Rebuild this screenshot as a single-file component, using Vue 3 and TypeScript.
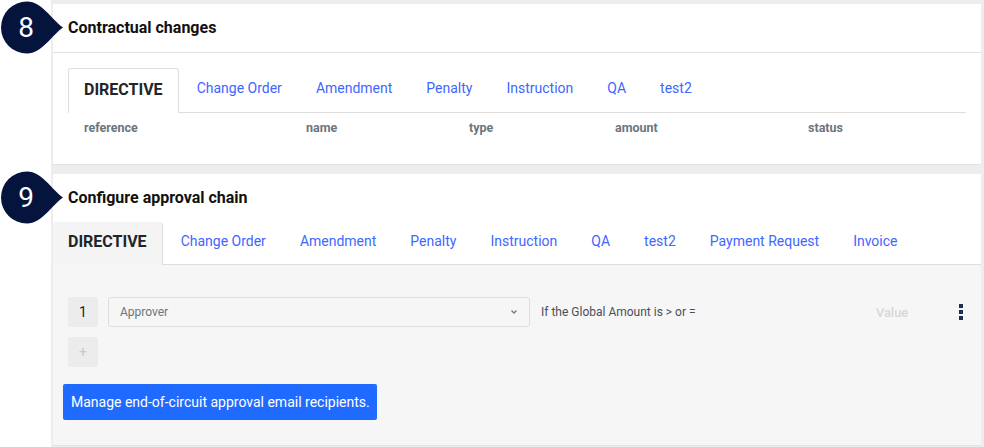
<script setup lang="ts">
const tabsTop: string[] = ['Change Order', 'Amendment', 'Penalty', 'Instruction', 'QA', 'test2']
const tabsBottom: string[] = [...tabsTop, 'Payment Request', 'Invoice']
const columns: string[] = ['reference', 'name', 'type', 'amount', 'status']
const badgePath = 'M63 27.5C52 20 42 1.5 27 1.5A26 26 0 0 0 27 53.5C42 53.5 52 35 63 27.5Z'
</script>

<template>
  <div class="page">
    <div class="content">
      <section class="card card-top">
        <h2 class="title title-top">Contractual changes</h2>
        <div class="top-body">
          <nav class="tabs">
            <span class="tab active">DIRECTIVE</span>
            <a v-for="t in tabsTop" :key="t" class="tab">{{ t }}</a>
          </nav>
          <div class="thead">
            <span v-for="c in columns" :key="c">{{ c }}</span>
          </div>
        </div>
      </section>

      <section class="card card-bottom">
        <h2 class="title title-bottom">Configure approval chain</h2>
        <nav class="tabs tabs-flush">
          <span class="tab active shaded">DIRECTIVE</span>
          <a v-for="t in tabsBottom" :key="t" class="tab">{{ t }}</a>
        </nav>
        <div class="chain">
          <div class="row">
            <span class="step">1</span>
            <div class="select">
              <span>Approver</span>
              <svg width="8" height="6" viewBox="0 0 8 6" class="chev">
                <path d="M1.5 1.5L4 4L6.5 1.5" fill="none" stroke="#777" stroke-width="1.3" />
              </svg>
            </div>
            <span class="cond">If the Global Amount is &gt; or =</span>
            <span class="value">Value</span>
            <span class="kebab"><i></i><i></i><i></i></span>
          </div>
          <span class="step add">+</span>
          <button class="manage" type="button">Manage end-of-circuit approval email recipients.</button>
        </div>
      </section>
    </div>

    <div class="badge badge-8">
      <svg width="64" height="55" viewBox="0 0 64 55"><path :d="badgePath" fill="#05143d" /></svg>
      <span>8</span>
    </div>
    <div class="badge badge-9">
      <svg width="64" height="55" viewBox="0 0 64 55"><path :d="badgePath" fill="#05143d" /></svg>
      <span>9</span>
    </div>
  </div>
</template>

<style>
html, body { margin: 0; background: #fff; }
</style>

<style scoped>
.page {
  position: relative;
  width: 984px;
  height: 447px;
  padding-left: 51px;
  box-sizing: border-box;
  overflow: hidden;
  font-family: Roboto, "Liberation Sans", sans-serif;
}
.content {
  height: 447px;
  box-sizing: border-box;
  background: #ededed;
  padding: 4px 3px 0 2px;
  display: flex;
  flex-direction: column;
  gap: 9px;
}
.card {
  background: #fff;
  box-sizing: border-box;
  border-bottom: 1px solid #e3e3e3;
}
.card-top { height: 161px; }
.card-bottom { height: 272px; display: flex; flex-direction: column; }
.title {
  margin: 0;
  font-size: 16px;
  font-weight: 700;
  line-height: 20px;
  color: #111;
  padding-left: 15px;
}
.title-top {
  padding-top: 14px;
  padding-bottom: 14px;
  border-bottom: 1px solid #e3e3e3;
}
.title-bottom {
  padding-top: 14px;
  padding-bottom: 14px;
}
.top-body { padding: 15px 15px 0; }
.tabs {
  display: flex;
  gap: 2px;
  border-bottom: 1px solid #dedede;
  height: 44px;
  box-sizing: content-box;
}
.tabs-flush { height: 42px; }
.tabs-flush .tab { height: 38px; }
.tab {
  padding: 0 16px;
  font-size: 14px;
  color: #3f66ff;
  display: flex;
  align-items: center;
  height: 40px;
}
.tabs .active {
  color: #212529;
  font-size: 16px;
  font-weight: 700;
  background: #fff;
  border: 1px solid #dedede;
  border-bottom: 0;
  border-radius: 3px 3px 0 0;
  height: 45px;
  box-sizing: border-box;
  padding: 0 15px 3px;
  margin-bottom: -1px;
}
.tabs .shaded {
  background: #f4f4f4;
  border-top-color: #f4f4f4;
  border-left: 0;
  height: 43px;
  padding-bottom: 5px;
}
.thead {
  display: grid;
  grid-template-columns: 222px 163px 146px 193px 1fr;
  padding: 8px 16px 0;
  font-size: 12.5px;
  font-weight: 700;
  line-height: 14px;
  color: #6c757d;
}
.chain {
  flex: 1;
  background: #f6f6f6;
  padding: 32px 0 0 15px;
  display: flex;
  flex-direction: column;
  align-items: flex-start;
}
.row {
  display: flex;
  align-items: center;
  height: 30px;
  width: 100%;
}
.step {
  width: 30px;
  height: 30px;
  background: #ececec;
  border-radius: 2px;
  display: flex;
  align-items: center;
  justify-content: center;
  font-size: 14px;
  color: #212529;
  flex: none;
}
.select {
  width: 422px;
  height: 30px;
  box-sizing: border-box;
  margin-left: 10px;
  border: 1px solid #dedede;
  border-radius: 3px;
  padding: 0 11px 0 11px;
  display: flex;
  align-items: center;
  justify-content: space-between;
  font-size: 12px;
  color: #6c757d;
}
.cond {
  margin-left: 11px;
  font-size: 12px;
  color: #495057;
  width: 335px;
}
.value {
  font-size: 12.8px;
  font-weight: 500;
  color: #d6d6d6;
  width: 83px;
}
.kebab {
  display: flex;
  flex-direction: column;
  gap: 2px;
}
.kebab i {
  width: 4px;
  height: 4px;
  background: #1f2d55;
}
.add {
  margin-top: 10px;
  color: #c9c9c9;
  font-size: 14px;
}
.manage {
  margin: 17px 0 0 -5px;
  width: 314px;
  height: 36px;
  border: 0;
  border-radius: 2px;
  background: #1f6bff;
  color: #fff;
  font-family: inherit;
  font-size: 14px;
  padding: 0 8px;
  text-align: left;
  white-space: nowrap;
}
.badge {
  position: absolute;
  left: 0;
  width: 64px;
  height: 55px;
}
.badge-8 { top: 0; }
.badge-9 { top: 170px; }
.badge svg { display: block; }
.badge span {
  position: absolute;
  left: 0;
  width: 52px;
  top: 0;
  line-height: 55px;
  text-align: center;
  color: #fff;
  font-size: 28px;
}
</style>
